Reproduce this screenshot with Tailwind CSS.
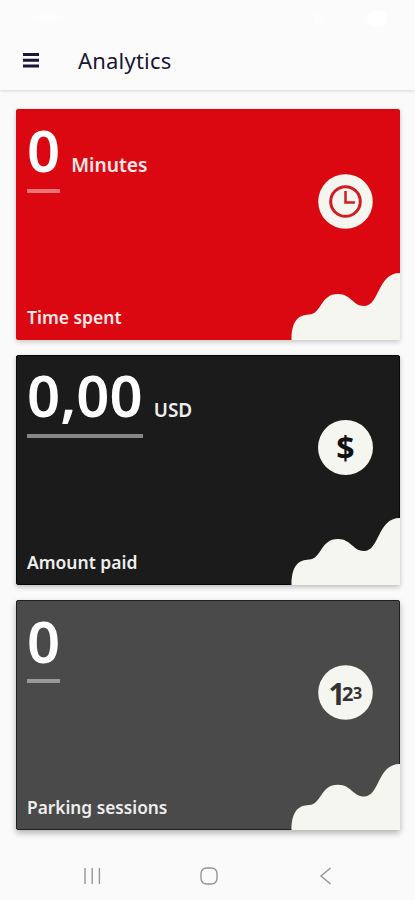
<!DOCTYPE html>
<html lang="en">
<head>
<meta charset="utf-8">
<meta name="viewport" content="width=device-width, initial-scale=1">
<title>Analytics</title>
<script src="https://cdn.jsdelivr.net/npm/@tailwindcss/browser@4"></script>
</head>
<body class="h-[900px] w-[415px] overflow-hidden bg-[#fafafa] font-['Noto_Sans','Open_Sans',sans-serif]">
<div class="flex h-full flex-col">
  <header class="h-[90px] shrink-0 bg-[#fbfbfb] shadow-[0_1px_3px_rgba(0,0,0,0.14)]">
    <!-- Status bar -->
    <div class="flex h-[30px] items-center justify-end gap-3 pt-2 pr-7 pl-8">
      <span class="mr-auto h-2 w-8 rounded bg-[#fdfdfd]"></span>
      <span class="size-2.5 rounded-full bg-[#fdfdfd]"></span>
      <span class="ml-8 h-4 w-5 rounded-lg bg-white"></span>
    </div>
    <div class="flex h-[60px] items-center pl-[23px]">
      <svg class="h-[16px] w-[16px]" viewBox="0 0 16 16" fill="#1b1537"><path d="M0 1h16v3H0zM0 6.7h16v3H0zM0 12.4h16v3H0z"/></svg>
      <h1 class="ml-[39px] text-[22px] leading-8 tracking-[0.2px] text-[#1b1537]">Analytics</h1>
    </div>
  </header>
  <main class="flex flex-col gap-[15px] pt-[19px] pr-[15px] pl-[16px]">
    <section class="relative flex h-[231px] flex-col justify-between rounded-[2px] bg-[#dc0811] pt-[11px] pb-[11px] pl-[11px] shadow-[0_2px_5px_rgba(0,0,0,0.2)]">
      <div class="flex items-baseline gap-[11px] text-white">
        <div class="border-b-[4.5px] border-[#ee7378] pb-[9px] text-[58px] leading-[60px] font-semibold">0</div>
        <span class="text-[19.2px] font-semibold text-[#fce9e9]">Minutes</span>
      </div>
      <p class="text-[17.5px] leading-6 font-semibold text-[#fce9e9]">Time spent</p>
      <svg class="absolute top-[65px] right-[27px] size-[55px]" viewBox="0 0 55 55"><circle cx="27.5" cy="27.5" r="27.3" fill="#f6f6f1"/><g fill="none" stroke="#d41b23"><circle cx="27.5" cy="27.5" r="14.8" stroke-width="3"/><path d="M27.500 17v11.500H37" stroke-width="2.5"/></g></svg>
      <svg class="absolute right-0 bottom-0 h-[67px] w-[109px]" viewBox="0 0 109 67"><path d="M.5 67C.5 47 8 42 18 41.500C31 41 29 21 47 21C60 21 62 33 73 33C89 33 86 0 109 0V67Z" fill="#f6f6f1"/></svg>
    </section>
    <section class="relative flex h-[230px] flex-col justify-between rounded-[2px] border border-[#080808] bg-[#1b1b1b] pt-[9px] pb-[10px] pl-[10px] shadow-[0_2px_5px_rgba(0,0,0,0.25)]">
      <div class="flex items-baseline gap-[11px] text-white">
        <div class="border-b-[4.5px] border-[#868686] pb-[9px] text-[58px] leading-[60px] font-semibold">0,00</div>
        <span class="text-[19px] font-semibold text-[#eeeeee]">USD</span>
      </div>
      <p class="text-[17.5px] leading-6 font-semibold text-[#eeeeee]">Amount paid</p>
      <div class="absolute top-[64px] right-[26px] flex size-[55px] items-center justify-center rounded-full bg-[#f6f6f1] font-['Open_Sans','Noto_Sans',sans-serif] text-[32px] leading-none font-bold text-[#111111]">$</div>
      <svg class="absolute -right-px -bottom-px h-[67px] w-[109px]" viewBox="0 0 109 67"><path d="M.5 67C.5 47 8 42 18 41.500C31 41 29 21 47 21C60 21 62 33 73 33C89 33 86 0 109 0V67Z" fill="#f6f6f1"/></svg>
    </section>
    <section class="relative flex h-[230px] flex-col justify-between rounded-[2px] border border-[#202020] bg-[#4a4a4a] pt-[10px] pb-[9px] pl-[10px] shadow-[0_3px_6px_rgba(0,0,0,0.3)]">
      <div class="flex items-baseline text-white">
        <div class="border-b-[4.5px] border-[#999999] pb-[8px] text-[58px] leading-[60px] font-semibold">0</div>
      </div>
      <p class="text-[17.3px] leading-6 font-semibold text-[#eeeeee]">Parking sessions</p>
      <svg class="absolute top-[64px] right-[26px] size-[55px] font-bold" viewBox="0 0 55 55"><circle cx="27.5" cy="27.5" r="27.3" fill="#f6f6f1"/><text x="10.500" y="40" fill="#333333" font-size="29.500">1<tspan dx="-3.500" dy="-4.500" font-size="20">2</tspan><tspan dx="-0.300" dy="-1.700" font-size="16">3</tspan></text></svg>
      <svg class="absolute -right-px -bottom-px h-[66px] w-[109px]" viewBox="0 0 109 67" preserveAspectRatio="none"><path d="M.5 67C.5 47 8 42 18 41.500C31 41 29 21 47 21C60 21 62 33 73 33C89 33 86 0 109 0V67Z" fill="#f6f6f1"/></svg>
    </section>
  </main>
  <!-- System navigation -->
  <nav class="mt-auto flex h-[48px] items-center justify-between pr-[80px] pl-[83px]">
    <svg class="h-[18px] w-[18px]" viewBox="0 0 18 18" fill="none" stroke="#949494" stroke-width="1.4"><path d="M2 1v16M9.200 1v16M16.400 1v16"/></svg>
    <svg class="size-[18px]" viewBox="0 0 18 18" fill="none" stroke="#949494" stroke-width="1.4"><rect x="1" y="1" width="16" height="16" rx="5.500"/></svg>
    <svg class="h-[18px] w-[18px]" viewBox="0 0 18 18" fill="none" stroke="#949494" stroke-width="1.4"><path d="M13.500 1L4 9l9.500 8"/></svg>
  </nav>
</div>
</body>
</html>
